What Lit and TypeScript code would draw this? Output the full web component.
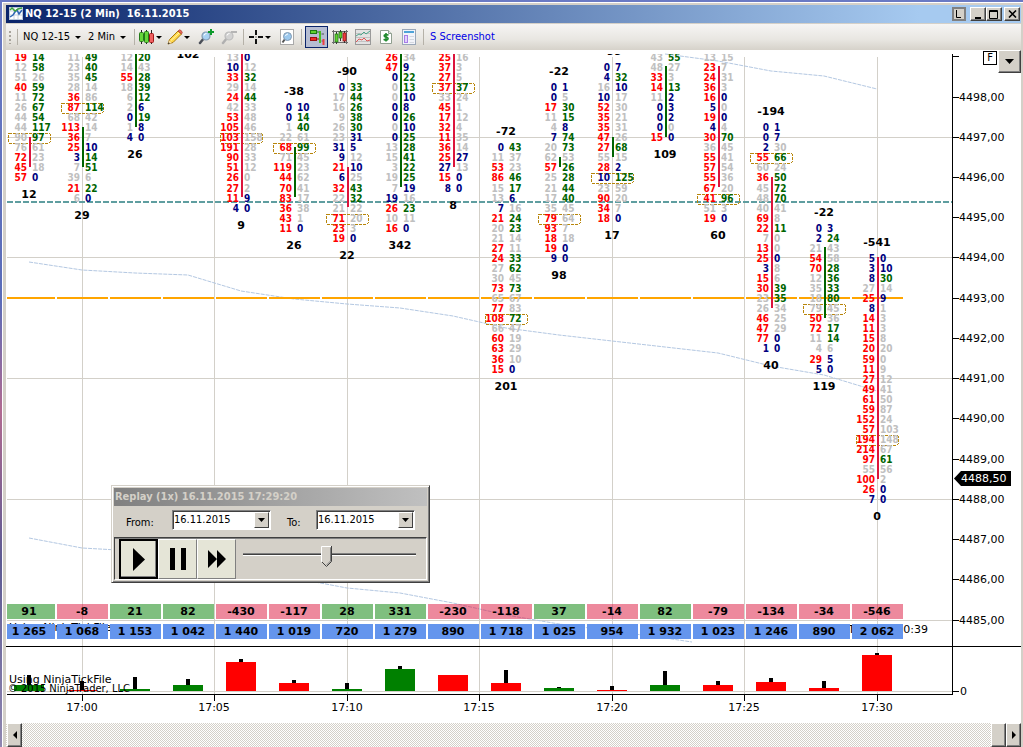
import { LitElement, html, svg, css } from "lit";
import { customElement } from "lit/decorators.js";

interface Bar {
  start: number;
  rows: string;
  box?: number;
  line?: [number, number, "up" | "down"];
  top?: string;
  bottom?: string;
  delta: string;
  volume: string;
  hist: [number, number, "up" | "down"];
}

// Each row is "bid ask"; the prefix is the colour: r red, g green, n navy, s silver.
const BARS: Bar[] = [
  { start: 0, box: 8, line: [8, 11, "down"], bottom: "12", delta: "91", volume: "1 265", hist: [6, 16, "up"],
    rows: "r19 g14,s12 g58,s51 s26,r40 g59,s11 g72,s26 g67,s44 g54,s44 g117,s90 g97,s76 s61,r72 s23,r45 s18,r57 n0" },
  { start: 0, box: 5, line: [7, 11, "up"], bottom: "29", delta: "-8", volume: "1 068", hist: [1, 10, "down"],
    rows: "s11 g49,s23 g40,s35 g45,s28 s14,r36 s86,r87 g114,s68 s42,r113 s14,r36 s7,r25 n10,n3 g14,s7 g51,s39 s6,r21 g22,s6 n0" },
  { start: 0, line: [-1, 7, "up"], bottom: "26", delta: "21", volume: "1 153", hist: [2, 14, "up"],
    rows: "s12 g20,s14 s43,r55 g28,s18 g39,s6 g12,s2 n6,n0 g19,s1 n8,n4 n0" },
  { start: -1, bottom: "102", delta: "82", volume: "1 042", hist: [6, 12, "up"], rows: "" },
  { start: 0, box: 8, line: [-1, 14, "down"], bottom: "9", delta: "-430", volume: "1 440", hist: [29, 32, "down"],
    rows: "s13 n0,n10 s12,r33 g32,s29 s14,r24 g44,s42 s33,r53 s48,r105 s46,r103 s158,r191 s28,r90 s33,r51 s12,r26 s0,r27 s2,r11 n9,n4 n0" },
  { start: 5, box: 9, line: [9, 14, "up"], top: "-38", bottom: "26", delta: "-117", volume: "1 019", hist: [8, 11, "down"],
    rows: "n0 n10,n0 g14,s1 g40,s22 s61,r68 g99,s71 s45,r119 s23,r44 s62,r70 s41,r83 s17,r36 s38,r43 s1,r11 n0" },
  { start: 3, box: 16, line: [11, 15, "down"], top: "-90", bottom: "22", delta: "28", volume: "720", hist: [2, 8, "up"],
    rows: "n0 g33,s17 g44,s16 g26,s9 g38,s26 g30,s23 n31,n31 n5,n9 s12,r21 n10,n6 s25,r32 g43,s22 g32,s21 s22,r71 s20,r23 s3,r19 n0" },
  { start: 0, line: [-1, 13, "up"], bottom: "342", delta: "331", volume: "1 279", hist: [22, 25, "up"],
    rows: "r26 s34,r47 n9,n0 g22,s0 g13,s0 n10,n0 n8,n0 g26,s0 n10,n0 g25,s13 g28,s15 g41,s3 g22,s19 g25,s7 n19,n19 s16,r26 g23,s10 s11,r16 n0" },
  { start: 0, box: 3, line: [-1, 11, "down"], bottom: "8", delta: "-230", volume: "890", hist: [16, 16, "down"],
    rows: "r25 s16,r37 s3,r27 s5,r37 g37,s33 s24,r45 s1,r17 s12,r32 s4,r11 s35,r36 s14,r25 n27,n27 s13,r15 n0,n8 n0" },
  { start: 9, box: 26, top: "-72", bottom: "201", delta: "-118", volume: "1 718", hist: [8, 21, "down"],
    rows: "n0 g43,s11 s37,r53 s23,r86 g46,s15 g17,s13 n6,n7 s16,r21 g24,s20 g23,s21 s14,r27 s11,r24 g33,s27 g62,s30 s45,r73 g73,s65 s67,r77 s83,r108 g72,s66 s47,r60 s19,r63 s29,r36 s10,r15 n0" },
  { start: 3, box: 16, line: [10, 11, "up"], top: "-22", bottom: "98", delta: "37", volume: "1 025", hist: [3, 4, "up"],
    rows: "n0 n1,n0 s5,r17 g30,s11 g15,s4 n8,n7 g74,s20 g73,s62 s53,r57 g26,s25 g28,s21 g44,s17 g40,s35 s45,r79 s64,r93 s7,r18 s18,r19 n0,n9 n0" },
  { start: 1, box: 12, line: [8, 10, "up"], top: "-99", bottom: "17", delta: "-14", volume: "954", hist: [1, 5, "down"],
    rows: "n0 n7,n4 g32,s16 n10,n10 s17,r52 s30,r35 s21,r35 s31,r47 s26,r27 g68,s55 s15,r28 n2,n10 g125,s23 s59,r90 s20,r34 s7,r18 n0" },
  { start: 0, line: [1, 8, "up"], bottom: "109", delta: "82", volume: "1 932", hist: [6, 20, "up"],
    rows: "s43 g55,s48 s27,r33 s3,r14 g13,s11 n2,n0 n3,n0 n2,n0 s0,r15 n0" },
  { start: 0, box: 14, line: [1, 13, "down"], bottom: "60", delta: "-79", volume: "1 023", hist: [6, 10, "down"],
    rows: "s13 s15,r23 s7,r24 s31,r36 s3,r16 n0,n5 s0,r19 n0,n4 s4,r30 g70,s36 s45,r55 s41,r57 s54,r55 s36,r67 s20,r41 g96,s51 s3,r19 n0" },
  { start: 7, box: 10, line: [12, 25, "down"], top: "-194", bottom: "40", delta: "-134", volume: "1 246", hist: [9, 13, "down"],
    rows: "n0 n1,n0 n7,n2 s30,r55 g66,s60 s24,r36 g50,s45 g72,s48 g70,s40 s41,r69 s8,r22 g11,s7 s0,r13 s0,r25 n0,n3 s8,r15 s6,r30 g39,s23 g35,s26 s34,r46 s25,r47 s29,r77 n0,n1 n0" },
  { start: 17, box: 25, line: [19, 26, "up"], top: "-22", bottom: "119", delta: "-34", volume: "890", hist: [3, 10, "down"],
    rows: "n0 n3,n2 g24,s21 s43,r54 s58,r70 g28,s12 g36,s35 g33,s18 g80,s79 s45,r50 s36,r72 g17,s11 g14,s4 s6,r29 n5,n5 n0" },
  { start: 20, box: 38, line: [20, 42, "down"], top: "-541", bottom: "0", delta: "-546", volume: "2 062", hist: [36, 38, "down"],
    rows: "n5 n0,n3 n10,n8 g30,s27 s14,r25 n9,n8 s1,r14 s3,r11 s3,r15 s8,r20 s20,r59 s0,r11 s9,r27 s12,r49 s41,r61 s50,r59 s87,r152 s24,r57 s103,r194 s148,r214 s67,r97 g61,s55 s56,r100 s2,r26 n0,n7 n0" },
];

const BAR_STEP = 53;
const TOP_PRICE = 4499;
const ROW_PITCH = 10.06;
const barX = (i: number) => 29 + i * BAR_STEP;
const rowY = (row: number) => Math.floor(56.78 + row * ROW_PITCH);
const rowBaseline = (row: number) => Math.floor(61.25 + row * ROW_PITCH);
const priceY = (price: number) => rowY((TOP_PRICE - price) * 4);

const BANDS = [
  "665,54 718,61 771,71 824,76 877,89",
  "29,262 82,270 135,273 188,275 241,291 294,299 347,304 400,308 453,316 506,328 559,335 612,341 665,347 718,353 771,366 824,375 877,391",
  "29,538 82,548 135,551 188,558 241,566 294,578 347,588 400,593 453,603 506,615 559,624 612,631 665,638 692,642",
];

@customElement("footprint-chart")
class FootprintChart extends LitElement {
  static styles = css`
    :host { display: block; min-height: 0; background: #fff; }
    svg { display: block; width: 100%; height: 100%; }
    text { font-family: "DejaVu Sans", Verdana, sans-serif; font-size: 11px; fill: #000; }
    .crisp { shape-rendering: crispEdges; }
    .cell { font-family: "DejaVu Sans Condensed", "DejaVu Sans", sans-serif; font-weight: bold; font-size: 10px; }
    .narrow { font-family: "DejaVu Sans Condensed", "DejaVu Sans", sans-serif; }
    .end { text-anchor: end; }
    .mid { text-anchor: middle; }
    .bold { font-weight: bold; }
    .r { fill: #ff0000; }
    .g { fill: #006400; }
    .n { fill: #000080; }
    .s { fill: #c0c0c0; }
    .grid { fill: #d3d0c9; }
    .band { fill: none; stroke: #b4c8e2; stroke-width: 1; stroke-dasharray: 4 1; }
    .line.up { fill: #006400; }
    .line.down { fill: #dc143c; }
    .poc { fill: none; stroke: #b8860b; stroke-dasharray: 3 1; }
    .vwap { stroke: #5f9ea0; stroke-width: 2; stroke-dasharray: 6 2; }
    .open { fill: #ffa500; }
    .plus { fill: #008000; fill-opacity: 0.5; }
    .minus { fill: #dc143c; fill-opacity: 0.5; }
    .volume { fill: #6495ed; }
    .hist.up { fill: #008000; }
    .hist.down { fill: #ff0000; }
    .white { fill: #fff; }
  `;

  private bar(b: Bar, i: number) {
    const x = barX(i);
    const rows = b.rows ? b.rows.split(",") : [];
    const last = b.start + rows.length - 1;
    return svg`
      ${b.box === undefined ? "" : svg`<rect class="poc crisp" x=${x - 21} y=${rowBaseline(b.box) - 8} width="42" height="10" rx="1"></rect>`}
      ${b.line ? svg`<rect class="line crisp ${b.line[2]}" x=${x} width="2" y=${Math.max(54, rowY(b.line[0]))}
          height=${rowY(b.line[1]) - Math.max(54, rowY(b.line[0]))}></rect>` : ""}
      ${rows.map((row, k) => {
        const [bid, ask] = row.split(" ");
        const y = rowBaseline(b.start + k);
        return svg`<text class="cell end ${bid[0]}" x=${x - 2} y=${y}>${bid.slice(1)}</text>
          <text class="cell ${ask[0]}" x=${x + 3} y=${y}>${ask.slice(1)}</text>`;
      })}
      ${b.top ? svg`<text class="bold mid" x=${x} y=${rowBaseline(b.start) - 16}>${b.top}</text>` : ""}
      ${b.bottom ? svg`<text class="bold mid" x=${x} y=${rowBaseline(last) + 17}>${b.bottom}</text>` : ""}`;
  }

  render() {
    const majors = [4497, 4494, 4491, 4488, 4485];
    const prices = Array.from({ length: 14 }, (_, i) => 4498 - i);
    const times = ["17:00", "17:05", "17:10", "17:15", "17:20", "17:25", "17:30"];
    const timeX = (i: number) => 82 + Math.floor(i * 132.5);
    return html`
      <svg viewBox="6 50 1015 673" preserveAspectRatio="xMinYMin meet" role="img" aria-label="NQ 12-15 footprint chart">
        <defs><clipPath id="plot"><rect x="6" y="54" width="946" height="592"></rect></clipPath></defs>
        <g class="crisp">
          ${majors.map((p) => svg`<rect class="grid" x="7" y=${priceY(p)} width="945" height="1"></rect>`)}
          ${times.map((_, i) => svg`<rect class="grid" x=${timeX(i)} y="57" width="1" height="637"></rect>`)}
          <rect class="grid" x="7" y="691" width="945" height="1"></rect>
        </g>
        ${BANDS.map((points) => svg`<polyline class="band" points=${points}></polyline>`)}
        <line class="vwap" x1="7" y1="202" x2="952" y2="202"></line>
        ${BARS.map((_, i) => svg`<rect class="open crisp" x=${barX(i) - 25 + (i ? 0 : 3)} y="297" width=${i ? 51 : 48} height="2"></rect>`)}
        <g clip-path="url(#plot)">${BARS.map((b, i) => this.bar(b, i))}</g>

        <text x="9" y="631">Using NinjaTickFile</text>
        <text class="end" x="928" y="633">Time 00:00:39</text>
        ${BARS.map((b, i) => {
          const x = barX(i) - 25 + (i ? 0 : 3);
          const w = i ? 51 : 48;
          return svg`
            <rect class="crisp ${b.delta[0] === "-" ? "minus" : "plus"}" x=${x} y="604" width=${w} height="15"></rect>
            <rect class="crisp volume" x=${x} y="624" width=${w} height="15"></rect>
            <text class="bold mid" x=${barX(i)} y="615">${b.delta}</text>
            <text class="bold mid" x=${barX(i)} y="635">${b.volume}</text>
            <rect class="crisp hist ${b.hist[2]}" x=${barX(i) - 15} y=${691 - b.hist[0]} width="30" height=${b.hist[0]}></rect>
            <rect class="crisp" x=${barX(i) - 2} y=${691 - b.hist[1]} width="4" height=${b.hist[1] - b.hist[0]}></rect>`;
        })}
        <text x="9" y="683">Using NinjaTickFile</text>
        <text class="narrow" x="8" y="692">© 2015 NinjaTrader, LLC</text>

        <g class="crisp">
          <rect x="6" y="646" width="1015" height="1"></rect>
          <rect x="7" y="694" width="946" height="1"></rect>
          <rect x="952" y="54" width="1" height="641"></rect>
          <rect x="953" y="56" width="6" height="1"></rect>
          <rect x="953" y="691" width="6" height="1"></rect>
          ${prices.map((p) => svg`<rect x="953" y=${priceY(p)} width="6" height="1"></rect>`)}
          ${times.map((_, i) => svg`<rect x=${timeX(i)} y="695" width="1" height="6"></rect>`)}
        </g>
        ${prices.map((p) => svg`<text x="959" y=${priceY(p) + 4}>${p},00</text>`)}
        <text x="960" y="695">0</text>
        ${times.map((t, i) => svg`<text class="mid" x=${timeX(i)} y="711">${t}</text>`)}
        <path d="M954 478.500L961 471H1011V486H961Z"></path>
        <text class="white" x="961" y="482">4488,50</text>
      </svg>`;
  }
}

@customElement("replay-panel")
class ReplayPanel extends LitElement {
  static styles = css`
    :host {
      display: block; box-sizing: border-box; padding: 2px; background: #d4d0c8;
      border: 1px solid; border-color: #d4d0c8 #404040 #404040 #d4d0c8;
      box-shadow: inset 1px 1px #fff, inset -1px -1px #808080;
      font: 11px/14px "DejaVu Sans Condensed", Tahoma, sans-serif; color: #000;
    }
    .title {
      height: 18px; line-height: 18px; padding-left: 1px; font-weight: bold; font-size: 11px; color: #d4d0c8;
      background: linear-gradient(90deg, #808080, #c0c0c0); white-space: nowrap; overflow: hidden;
    }
    .dates { display: flex; height: 31px; padding: 4px 12px 0; box-sizing: border-box; align-items: flex-start; }
    .dates label { padding-top: 6px; }
    .from { width: 46px; }
    .to { width: 29px; padding-left: 16px; }
    .combo {
      display: flex; position: relative; width: 99px; height: 20px; box-sizing: border-box; background: #fff;
      border: 1px solid; border-color: #808080 #fff #fff #808080; box-shadow: inset 1px 1px #404040;
    }
    select {
      appearance: none; flex: 1; border: 0; margin: 0; padding: 0 0 0 1px; background: transparent;
      font: inherit; color: #000;
    }
    .arrow {
      position: absolute; right: 1px; top: 1px; bottom: 1px; width: 15px; box-sizing: border-box; pointer-events: none;
      display: grid; place-items: center; background: #d4d0c8;
      border: 1px solid; border-color: #fff #404040 #404040 #fff;
    }
    .controls {
      display: flex; height: 43px; box-sizing: border-box; padding: 1px 0 0 4px;
      border: 1px solid; border-color: #404040 #fff #fff #404040; box-shadow: inset 0 1px #808080;
    }
    button {
      width: 39px; height: 40px; padding: 0; display: grid; place-items: center; background: #e5e5d7;
      border: 1px solid; border-color: #fff #808080 #808080 #fff; color: #000;
    }
    button.active { border: 2px solid #000; box-shadow: inset -1px -1px #808080; }
    .speed { flex: 1; display: flex; align-items: flex-start; padding: 7px 10px 0 7px; }
    input { appearance: none; flex: 1; min-width: 0; height: 22px; margin: 0; background: transparent; }
    input::-webkit-slider-runnable-track {
      height: 22px;
      background: linear-gradient(#808080, #808080) 0 7px / 100% 1px no-repeat,
        linear-gradient(#404040, #404040) 0 8px / 100% 1px no-repeat,
        linear-gradient(#fff, #fff) 0 9px / 100% 1px no-repeat;
    }
    input::-webkit-slider-thumb {
      appearance: none; width: 11px; height: 21px;
      background: url("data:image/svg+xml,%3Csvg xmlns='http://www.w3.org/2000/svg' width='11' height='21'%3E%3Cpath d='M.5 .5H10.5V15.500L5.500 20.500L.5 15.500Z' fill='%23d4d0c8'/%3E%3Cpath d='M10.500 .5H.5V15.500L5.500 20.500' fill='none' stroke='%23fff'/%3E%3Cpath d='M9.500 1.500V15L5.500 19' fill='none' stroke='%23808080'/%3E%3Cpath d='M10.500 0V15.500L5.500 20.500L1 16' fill='none' stroke='%23404040'/%3E%3C/svg%3E") no-repeat;
    }
  `;

  private combo(id: string) {
    return html`<div class="combo">
      <select id=${id}><option>16.11.2015</option></select>
      <span class="arrow"><svg width="7" height="4"><path d="M0 0H7L3.500 4Z"></path></svg></span>
    </div>`;
  }

  render() {
    return html`
      <div class="title">Replay (1x) 16.11.2015 17:29:20</div>
      <div class="dates">
        <label class="from" for="from">From:</label>${this.combo("from")}
        <label class="to" for="to">To:</label>${this.combo("to")}
      </div>
      <div class="controls">
        <button class="active" aria-label="Play"><svg width="13" height="23"><path d="M1 0L13 11.500L1 23Z"></path></svg></button>
        <button aria-label="Pause"><svg width="16" height="22"><path d="M0 0H5V22H0ZM11 0H16V22H11Z"></path></svg></button>
        <button aria-label="Fast forward"><svg width="18" height="18"><path d="M0 0L9 9L0 18ZM9 0L18 9L9 18Z"></path></svg></button>
        <div class="speed"><input type="range" aria-label="Replay speed" min="0" max="100" value="48" /></div>
      </div>`;
  }
}

const drop = html`<svg class="drop" width="6" height="3"><path d="M0 0H6L3 3Z"></path></svg>`;

const lens = (ring: string, glass: string, handle: string) => svg`
  <path d="M6 9L2 14" stroke=${handle} stroke-width="2.500" stroke-linecap="round"></path>
  <circle cx="8" cy="7" r="4" fill=${glass} stroke=${ring} stroke-width="1.200"></circle>
  <path d="M6 6.500A2.500 2.500 0 0 1 8.500 4.500" stroke="#fff" fill="none"></path>`;

const icons = {
  app: svg`<rect x="0.500" y="0.500" width="13" height="12" fill="#fff" stroke="#b9c6d8"></rect>
    <path d="M1 4H13M1 8H13M5 1V12M9 1V12" stroke="#c9d2de"></path>
    <path d="M1 10L4 8L6 5L8 3L10 7L13 3" fill="none" stroke="#2f66b5" stroke-width="1.500"></path>
    <path d="M1 3L3 1L6 4L9 2L13 1" fill="none" stroke="#3da23d" stroke-width="1.500"></path>`,
  candles: svg`<path d="M2.500 1V15M7.500 1V15M12.500 1V15" stroke="#222"></path>
    <rect x="0.500" y="3.500" width="4" height="9" rx="1" fill="#66d63a" stroke="#247a18"></rect>
    <rect x="5.500" y="2.500" width="4" height="11" rx="1" fill="#66d63a" stroke="#247a18"></rect>
    <rect x="10.500" y="4.500" width="4" height="9" rx="1" fill="#f06060" stroke="#a01818"></rect>`,
  pencil: svg`<path d="M1 15L2.500 10.500L11 2L14.500 5L6 13.500Z" fill="#ffd84a" stroke="#a87a10"></path>
    <path d="M11 2L12.500 0.800Q14.500 1 15.300 3.500L14.500 5Z" fill="#ee6a5a" stroke="#a83a30" stroke-width="0.700"></path>
    <path d="M1 15L2.200 11.500L4.800 14Z" fill="#f4dcb0"></path><path d="M0.800 15.200L1.500 13.200L3 14.600Z" fill="#333"></path>
    <path d="M4 11.500L12 4" stroke="#fff3b0"></path>`,
  zoomIn: svg`${lens("#8299b0", "#a9d2f2", "#4a4f58")}<path d="M13 0V6M10 3H16" stroke="#0d9a2c" stroke-width="2"></path>`,
  zoomOut: svg`${lens("#bcbcbc", "#d2d2d2", "#b0b0b0")}<path d="M10 3H16" stroke="#b5b5b5" stroke-width="2"></path>`,
  cross: svg`<path d="M8 1V6M8 10V15M1 8H6M10 8H15" stroke="#111" stroke-width="2"></path><rect x="7.500" y="7.500" width="1" height="1" fill="#111"></rect>`,
  page: svg`<rect x="1.500" y="0.500" width="13" height="15" fill="#fff" stroke="#a9a9a9"></rect>
    <path d="M6 10L3.500 13.500" stroke="#555" stroke-width="2"></path>
    <circle cx="8.500" cy="7.500" r="4" fill="#9cc9ee" stroke="#8299b0"></circle>
    <path d="M6.500 7A2.500 2.500 0 0 1 9 5" stroke="#fff" fill="none"></path>`,
  trader: svg`<path d="M12.500 5H15M12.500 12H15" stroke="#555"></path>
    <rect x="1.500" y="1.500" width="6" height="3" fill="#5fd030" stroke="#1d7a14"></rect><path d="M8 3H11" stroke="#1d7a14"></path>
    <rect x="1.500" y="8.500" width="6" height="3" fill="#ee2a2a" stroke="#9a1010"></rect><path d="M8 10H11" stroke="#9a1010"></path>
    <rect x="10" y="2" width="2" height="12" fill="#4cc024"></rect><rect x="13.500" y="10" width="2" height="6" fill="#ee4040"></rect>`,
  boxed: svg`<path d="M0 2.500H16M0 13.500H16M1.500 1V15M14.500 1V15" stroke="#6d6d6d"></path>
    <path d="M4.500 3V15M8.500 1V12M12.500 2V14" stroke="#333"></path>
    <rect x="3" y="5" width="3" height="8" fill="#5fd030" stroke="#1d6a14" stroke-width="0.700"></rect>
    <rect x="7" y="3" width="3" height="6" fill="#5fd030" stroke="#1d6a14" stroke-width="0.700"></rect>
    <rect x="11" y="4" width="3" height="8" fill="#ee4040" stroke="#8a1010" stroke-width="0.700"></rect>`,
  lines: svg`<rect x="0.500" y="0.500" width="15" height="15" fill="#e3e3e3" stroke="#9a9a9a"></rect>
    <path d="M1 4.500H15M1 8.500H15M1 12.500H15" stroke="#c3c3c3"></path>
    <path d="M1 7L4 5L6 6L9 3L11 5L15 2" fill="none" stroke="#4aa58a"></path>
    <path d="M1 13L4 10L7 11L9 9L12 12L15 11" fill="none" stroke="#e25555"></path>`,
  dollar: svg`<path d="M2.500 1.500H10.500L13.500 4.500V14.500H2.500Z" fill="#fff" stroke="#8f9f8f"></path>
    <path d="M10.500 1.500V4.500H13.500" fill="#dfe8df" stroke="#8f9f8f"></path>
    <path d="M10.500 6.200Q8 4.800 6.500 6Q5.500 7.500 8 8Q10.800 8.600 9.800 10.300Q8.200 11.800 5.600 10.300M8 4V12.500" fill="none" stroke="#1e8a2c" stroke-width="1.600"></path>`,
  panel: svg`<rect x="1.500" y="0.500" width="13" height="15" fill="#f2f4fa" stroke="#9aa7b8"></rect>
    <rect x="3" y="2" width="10" height="2" fill="#4ea3d8"></rect>
    <rect x="3.500" y="6.500" width="3" height="7" fill="#e2d2fb" stroke="#a77de8"></rect>
    <path d="M8.500 7.500H13M8.500 10.500H13M8.500 13.500H13" stroke="#d4d8e0"></path>`,
};

const icon = (shape: unknown) => html`<svg width="16" height="16" viewBox="0 0 16 16" fill="none">${shape}</svg>`;

@customElement("app-root")
class AppRoot extends LitElement {
  static styles = css`
    :host {
      display: block; box-sizing: border-box; height: 100vh; padding: 2px 0 0 2px; overflow: hidden;
      background: linear-gradient(180deg, #6a7ac4, #5a6cb8 40%, #b06a90 55%, #5d5a92 75%, #8f86b0);
      font: 11px/14px "DejaVu Sans Condensed", Tahoma, sans-serif; color: #000;
    }
    .window {
      height: 100%; box-sizing: border-box; display: flex; flex-direction: column; background: #d4d0c8;
      border: solid #fff; border-width: 1px 0 0 1px; padding: 2px 2px 0 3px;
    }
    button { font: inherit; color: inherit; padding: 0; border: 0; background: none; }
    .title {
      display: flex; align-items: center; height: 18px; margin-bottom: 1px; padding: 0 1px 0 3px; color: #fff;
      background: linear-gradient(90deg, #0a246a, #a6caf0 90%);
    }
    .title h1 { flex: 1; margin: 0 0 0 2px; font: bold 11px/18px "DejaVu Sans Condensed", Tahoma, sans-serif; white-space: pre; }
    .caption {
      width: 16px; height: 14px; box-sizing: border-box; display: grid; place-items: center; background: #d4d0c8;
      border: 1px solid; border-color: #fff #404040 #404040 #fff; box-shadow: inset -1px -1px #808080; color: #000;
    }
    .link { width: 14px; margin-right: 4px; border: 2px solid #808080; box-shadow: none; }
    .close { margin-left: 2px; }
    .toolbar {
      display: flex; align-items: center; height: 26px; flex: none; overflow: hidden; white-space: nowrap;
      background: linear-gradient(#f6f5f4, #e8e6e1 60%, #d6d2ca);
    }
    .grip { width: 8px; height: 14px; background: radial-gradient(circle, #a8a49c 1px, transparent 1px) 0 0 / 8px 4px; }
    .sep { width: 7px; height: 16px; background: linear-gradient(#b5b1a8, #b5b1a8) 3px 0 / 1px 100% no-repeat; }
    .pick { display: flex; align-items: center; justify-content: space-between; height: 22px; padding: 0 5px 0 2px; box-sizing: border-box; }
    .instrument { width: 65px; }
    .interval { width: 45px; }
    .menu { width: 28px; padding: 0 4px 0 1px; }
    .tool { width: 23px; height: 22px; display: grid; place-items: center; }
    .pressed { border: 1px solid #0a246a; background: #b6bdd2; }
    .shot { padding-left: 3px; color: #0000e6; text-decoration: none; font-size: 11px; }
    .body { flex: 1; min-height: 0; display: flex; flex-direction: column; position: relative; background: #fff; }
    footprint-chart { flex: 1; }
    .fixed {
      position: absolute; right: 24px; top: 1px; width: 14px; height: 14px; box-sizing: border-box;
      border: 1px solid #000; background: #fff; line-height: 12px; text-align: center;
    }
    .more {
      position: absolute; right: 0; top: 0; width: 23px; height: 23px; display: grid; place-items: center; background: #d4d0c8;
      border: 1px solid; border-color: #fff #404040 #404040 #fff; box-shadow: inset -1px -1px #808080;
    }
    replay-panel { position: absolute; left: 105px; top: 435px; width: 319px; }
    .scroll {
      flex: none; display: flex; height: 24px; padding-left: 1px;
      background: repeating-conic-gradient(#d4d0c8 0 25%, #fff 0 50%) 0 0 / 2px 2px;
    }
    .scroll button {
      width: 15px; box-sizing: border-box; display: grid; place-items: center; background: #d4d0c8;
      border: 1px solid; border-color: #fff #404040 #404040 #fff; box-shadow: inset -1px -1px #808080;
    }
    .trough { flex: 1; }
  `;

  render() {
    return html`
      <div class="window">
        <header class="title">
          <svg width="14" height="14">${icons.app}</svg>
          <h1>NQ 12-15 (2 Min)  16.11.2015</h1>
          <button class="caption link" aria-label="Link"><svg width="6" height="8"><path d="M0.500 0V7.500H5" fill="none" stroke="#000"></path></svg></button>
          <button class="caption" aria-label="Minimize"><svg width="10" height="9"><path d="M2 7H8V9H2Z"></path></svg></button>
          <button class="caption" aria-label="Maximize"><svg width="10" height="9"><path d="M0.500 0.500H8.500V8.500H0.500ZM0 1.500H9" fill="none" stroke="#000"></path></svg></button>
          <button class="caption close" aria-label="Close"><svg width="9" height="8"><path d="M1 0.500L8 7.500M8 0.500L1 7.500" stroke="#000" stroke-width="1.600"></path></svg></button>
        </header>
        <nav class="toolbar">
          <span class="grip"></span><span class="sep"></span>
          <button class="pick instrument">NQ 12-15${drop}</button>
          <button class="pick interval">2 Min${drop}</button>
          <span class="sep"></span>
          <button class="pick menu" aria-label="Chart style">${icon(icons.candles)}${drop}</button>
          <button class="pick menu" aria-label="Drawing tools">${icon(icons.pencil)}${drop}</button>
          <button class="tool" aria-label="Zoom in">${icon(icons.zoomIn)}</button>
          <button class="tool" aria-label="Zoom out">${icon(icons.zoomOut)}</button>
          <span class="sep"></span>
          <button class="pick menu" aria-label="Crosshair">${icon(icons.cross)}${drop}</button>
          <button class="tool" aria-label="Data box">${icon(icons.page)}</button>
          <span class="sep"></span>
          <button class="tool pressed" aria-label="Chart trader">${icon(icons.trader)}</button>
          <button class="tool" aria-label="Data series">${icon(icons.boxed)}</button>
          <button class="tool" aria-label="Indicators">${icon(icons.lines)}</button>
          <button class="tool" aria-label="Strategies">${icon(icons.dollar)}</button>
          <button class="tool" aria-label="Properties">${icon(icons.panel)}</button>
          <span class="sep"></span>
          <a class="shot" href="#screenshot">S Screenshot</a>
        </nav>
        <main class="body">
          <footprint-chart></footprint-chart>
          <button class="fixed">F</button>
          <button class="more" aria-label="More"><svg width="9" height="5"><path d="M0 0H9L4.500 5Z"></path></svg></button>
          <replay-panel></replay-panel>
        </main>
        <footer class="scroll">
          <button aria-label="Scroll left"><svg width="4" height="8"><path d="M4 0V8L0 4Z"></path></svg></button>
          <span class="trough"></span>
          <button aria-label="Scroll position"></button>
          <button aria-label="Scroll right"><svg width="4" height="8"><path d="M0 0V8L4 4Z"></path></svg></button>
        </footer>
      </div>`;
  }
}
